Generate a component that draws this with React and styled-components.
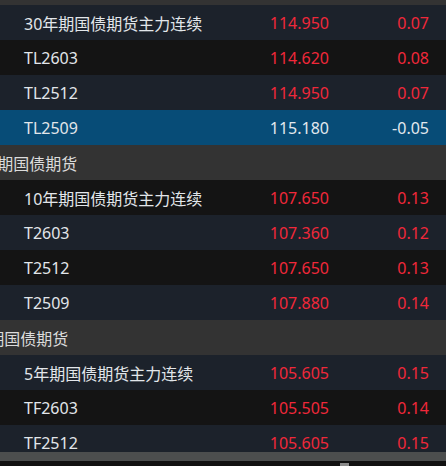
import React from 'react'
import styled, { createGlobalStyle } from 'styled-components'

const GlobalStyle = createGlobalStyle`
  html, body { margin: 0; padding: 0; background: #121212; }
  body { font-family: "Noto Sans", "Noto Sans CJK SC", sans-serif; }
`

const sections = [
  {
    title: '30年期国债期货',
    rows: [
      { name: '30年期国债期货主力连续', price: '114.950', change: '0.07', up: true, tone: 'blue' },
      { name: 'TL2603', price: '114.620', change: '0.08', up: true, tone: 'black' },
      { name: 'TL2512', price: '114.950', change: '0.07', up: true, tone: 'blue' },
      { name: 'TL2509', price: '115.180', change: '-0.05', up: false, tone: 'selected' },
    ],
  },
  {
    title: '10年期国债期货',
    rows: [
      { name: '10年期国债期货主力连续', price: '107.650', change: '0.13', up: true, tone: 'black' },
      { name: 'T2603', price: '107.360', change: '0.12', up: true, tone: 'blue' },
      { name: 'T2512', price: '107.650', change: '0.13', up: true, tone: 'black' },
      { name: 'T2509', price: '107.880', change: '0.14', up: true, tone: 'blue' },
    ],
  },
  {
    title: '5年期国债期货',
    rows: [
      { name: '5年期国债期货主力连续', price: '105.605', change: '0.15', up: true, tone: 'blue' },
      { name: 'TF2603', price: '105.505', change: '0.14', up: true, tone: 'black' },
      { name: 'TF2512', price: '105.605', change: '0.15', up: true, tone: 'blue' },
    ],
  },
]

const tones = {
  blue: '#1c222b',
  black: '#141414',
  selected: '#074c77',
}

const Panel = styled.div`
  width: 446px;
  height: 466px;
  display: flex;
  flex-direction: column;
  background: #121212;
  overflow: hidden;
`

const Viewport = styled.div`
  height: 452px;
  overflow: hidden;
  flex-shrink: 0;
`

const List = styled.div`
  margin-top: -30px;
`

const Header = styled.div`
  height: 35px;
  display: flex;
  align-items: center;
  background: #333333;
  color: #dcdcdc;
  font-size: 16px;
  overflow: hidden;
  white-space: nowrap;
`

const HeaderLabel = styled.span`
  margin-left: -37px;
`

const Row = styled.div`
  height: 35px;
  display: grid;
  grid-template-columns: 1fr 90px 100px;
  align-items: center;
  padding: 0 17px 0 24px;
  background: ${p => tones[p.$tone]};
  font-size: 16px;
  white-space: nowrap;
`

const Name = styled.span`
  color: #e2e6ea;
`

const Num = styled.span`
  text-align: right;
  color: ${p => (p.$up ? '#f0283a' : '#e2e8ee')};
`

const ScrollBar = styled.div`
  height: 9px;
  background: #4c4e4e;
`

const Footer = styled.div`
  flex: 1;
  display: flex;
  align-items: flex-end;
  padding-left: 340px;
  background: #111111;
`

const Grip = styled.div`
  width: 9px;
  height: 3px;
  background: #8a8a8a;
`

export default function App() {
  return (
    <Panel>
      <GlobalStyle />
      <Viewport>
        <List>
          {sections.map(s => (
            <React.Fragment key={s.title}>
              <Header>
                <HeaderLabel>{s.title}</HeaderLabel>
              </Header>
              {s.rows.map(r => (
                <Row key={r.name} $tone={r.tone}>
                  <Name>{r.name}</Name>
                  <Num $up={r.up}>{r.price}</Num>
                  <Num $up={r.up}>{r.change}</Num>
                </Row>
              ))}
            </React.Fragment>
          ))}
        </List>
      </Viewport>
      <ScrollBar />
      <Footer>
        <Grip />
      </Footer>
    </Panel>
  )
}
